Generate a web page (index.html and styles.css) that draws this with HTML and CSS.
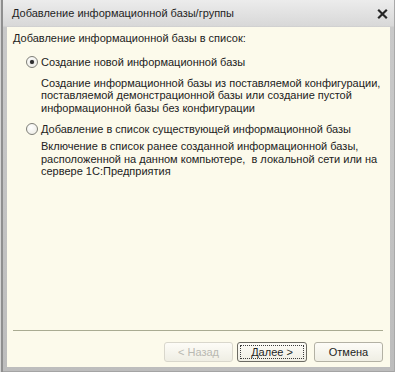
FILE: index.html
```html
<!DOCTYPE html>
<html>
<head>
    <meta charset="utf-8"/>
    <title>Добавление информационной базы/группы</title>
    <link rel="stylesheet" href="styles.css">
</head>
<body>
<div class="window">
    <div class="titlebar">
        <span class="title">Добавление информационной базы/группы</span>
        <svg class="close" width="11" height="10" viewBox="0 0 11 10">
            <path d="M1.2 0.8 L9.8 9.2 M9.8 0.8 L1.2 9.2" stroke="#262626" stroke-width="2.2"/>
        </svg>
    </div>
    <div class="content">
        <div class="body">
            <div class="heading">Добавление информационной базы в список:</div>
            <div class="radio-row">
                <span class="radio checked"></span>
                <span>Создание новой информационной базы</span>
            </div>
            <div class="desc first">Создание информационной базы из поставляемой конфигурации, поставляемой демонстрационной базы или создание пустой информационной базы без конфигурации</div>
            <div class="radio-row second">
                <span class="radio"></span>
                <span>Добавление в список существующей информационной базы</span>
            </div>
            <div class="desc">Включение в список ранее созданной информационной базы, расположенной на данном компьютере,&nbsp; в локальной сети или на сервере 1С:Предприятия</div>
        </div>
        <div class="separator"></div>
        <div class="buttons">
            <button class="btn" disabled>&lt; Назад</button>
            <button class="btn default"><span class="focus">Далее &gt;</span></button>
            <button class="btn cancel">Отмена</button>
        </div>
    </div>
</div>
</body>
</html>
```

FILE: styles.css
```css
* {
    box-sizing: border-box;
}

body {
    margin: 0;
    width: 395px;
    height: 372px;
    overflow: hidden;
    font-family: "Liberation Sans", Arial, sans-serif;
    font-size: 11px;
    color: #222;
}

/* window frame */
.window {
    height: 372px;
    display: flex;
    flex-direction: column;
    padding: 0 5px 5px 7px;
    background: linear-gradient(to bottom, #ececec 0px, #d8d8d8 26px, #c9c9c9 27px, #bdbdbd 100%);
    box-shadow: inset 1px 0 0 #d6d6d6, inset 3px 0 0 #8f8f8f, inset -1px 0 0 #a9a9a9, inset 0 -1px 0 #a4a4a4;
}

.titlebar {
    height: 27px;
    display: flex;
    align-items: center;
    justify-content: space-between;
    padding: 0 2px 1px 5px;
}

.title {
    color: #1f1f1f;
    line-height: 13px;
}

.close {
    display: block;
    margin-top: 1px;
}

/* dialog content */
.content {
    flex: 1;
    display: flex;
    flex-direction: column;
    background: #fcfaeb;
}

.body {
    flex: 1;
    padding: 5px 7px 0 6px;
    line-height: 13px;
}

.heading {
    margin-bottom: 10px;
}

.radio-row {
    display: flex;
    align-items: center;
    gap: 3px;
    margin-left: 13px;
    height: 14px;
}

.radio-row.second {
    margin-top: 8px;
}

.radio {
    width: 12px;
    height: 12px;
    border-radius: 50%;
    border: 1px solid #7e7e78;
    background: radial-gradient(circle at 40% 35%, #ffffff, #e9e8e0);
    position: relative;
    flex: none;
}

.radio.checked::after {
    content: "";
    position: absolute;
    left: 3px;
    top: 3px;
    width: 4px;
    height: 4px;
    border-radius: 50%;
    background: #2e2e2e;
    box-shadow: 0 0 1px #555;
}

.desc {
    margin: 4px 0 0 28px;
    line-height: 12.5px;
}

.desc.first {
    margin-top: 7.5px;
}

.separator {
    height: 1px;
    background: #a9ab92;
    margin: 0 7px 11px 6px;
}

.buttons {
    display: flex;
    justify-content: flex-end;
    padding: 0 7px 5px 0;
}

.btn {
    font: inherit;
    width: 69px;
    height: 20px;
    border: 1px solid #b3b1a4;
    border-radius: 3px;
    background: linear-gradient(to bottom, #fdfcf7, #efeee4);
    color: #1e1e1e;
    padding: 0;
    line-height: 16px;
}

.btn.default {
    width: 70px;
    margin-left: 4px;
    border-color: #6c6b63;
    padding: 2px;
}

.btn.cancel {
    margin-left: 7px;
}

.btn[disabled] {
    color: #b9b9b2;
    border-color: #d9d7cc;
}

.focus {
    display: block;
    height: 100%;
    line-height: 12px;
    border: 1px dotted #3c3c3c;
}
```
